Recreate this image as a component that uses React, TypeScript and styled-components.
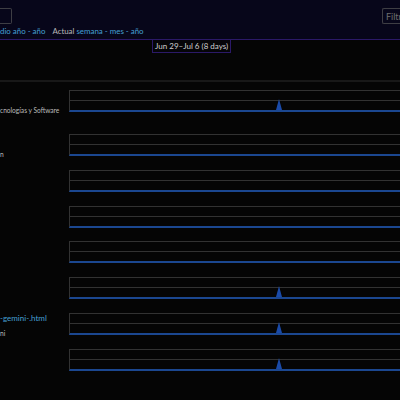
import styled, { createGlobalStyle } from "styled-components";

const GlobalStyle = createGlobalStyle`
  html, body {
    margin: 0;
    padding: 0;
    background: #050505;
    overflow: hidden;
  }
  body {
    font-family: Lato, "Noto Sans", sans-serif;
    color: #c8c8c8;
  }
`;

const Page = styled.div`
  width: 400px;
  height: 400px;
  overflow: hidden;
  background: #050505;
`;

const Header = styled.header`
  height: 40px;
  box-sizing: border-box;
  padding-top: 8px;
  background: #07061a;
  border-bottom: 1px solid #2b1968;
`;

const InputRow = styled.div`
  display: flex;
  justify-content: space-between;
  height: 16px;
`;

const CutInput = styled.input<{ $side: "left" | "right" }>`
  box-sizing: border-box;
  height: 16px;
  width: ${(p) => (p.$side === "left" ? "12px" : "18px")};
  padding: 0 0 0 3px;
  background: transparent;
  border: 1px solid #3e3e44;
  ${(p) =>
    p.$side === "left"
      ? "border-left: none; border-radius: 0 2px 2px 0;"
      : "border-right: none; border-radius: 2px 0 0 2px;"}
  font-family: Lato, sans-serif;
  font-size: 9px;
  color: #777;
  outline: none;
  &::placeholder {
    color: #6e6e6e;
  }
`;

const PeriodLine = styled.div`
  display: flex;
  gap: 7px;
  margin-top: 1px;
  font-size: 7.9px;
  line-height: 12px;
  white-space: nowrap;
`;

const LinkText = styled.span`
  color: #45a0d4;
`;

const PlainText = styled.span`
  color: #b8b8b8;
`;

const ChipRow = styled.div`
  display: flex;
  padding-left: 152px;
  margin-top: -1px;
  height: 41px;
  border-bottom: 2px solid #181818;
`;

const DateChip = styled.div`
  height: 14px;
  box-sizing: border-box;
  padding: 0 2px;
  border: 1px solid #2b1968;
  background: #050508;
  font-size: 8px;
  line-height: 12px;
  color: #cfcfcf;
  white-space: nowrap;
`;

const Rows = styled.div`
  padding-top: 8px;
`;

const Row = styled.div<{ $height: number }>`
  display: grid;
  grid-template-columns: 69px 1fr;
  height: ${(p) => p.$height}px;
`;

const Label = styled.div`
  display: flex;
  flex-direction: column;
  line-height: 10px;
  white-space: nowrap;
  overflow: hidden;
`;

const LabelLink = styled.div`
  height: 10px;
  margin-bottom: 5px;
  font-size: 8px;
  color: #45a0d4;
`;

const LabelDesc = styled.div`
  font-size: 6.6px;
  color: #bdbdbd;
`;

const Chart = styled.div`
  position: relative;
  height: 22px;
  box-sizing: border-box;
  border-top: 1px solid #323232;
  border-left: 1px solid #323232;
  border-bottom: 2px solid #1b4790;
`;

const MidLine = styled.div`
  margin-top: 9px;
  height: 1px;
  background: #323232;
`;

const Spike = styled.svg`
  position: absolute;
  left: 206px;
  bottom: 0;
`;

type RowData = { link?: string; desc?: string; spike: boolean; height: number };

const rows: RowData[] = [
  { desc: "cnologías y Software", spike: true, height: 44 },
  { desc: "n", spike: false, height: 35.8 },
  { spike: false, height: 35.8 },
  { spike: false, height: 35.8 },
  { spike: false, height: 35.8 },
  { spike: true, height: 35.8 },
  { link: "-gemini-.html", desc: "ni", spike: true, height: 35.8 },
  { spike: true, height: 35.8 },
];

const App = () => {
  return (
    <Page>
      <GlobalStyle />
      <Header>
        <InputRow>
          <CutInput $side="left" />
          <CutInput $side="right" placeholder="Filtrar..." />
        </InputRow>
        <PeriodLine>
          <LinkText>dio año - año</LinkText>
          <span>
            <PlainText>Actual </PlainText>
            <LinkText>semana - mes - año</LinkText>
          </span>
        </PeriodLine>
      </Header>
      <ChipRow>
        <DateChip>Jun 29–Jul 6 (8 days)</DateChip>
      </ChipRow>
      <Rows>
        {rows.map((r, i) => (
          <Row key={i} $height={r.height}>
            <Label>
              <LabelLink>{r.link ?? ""}</LabelLink>
              <LabelDesc>{r.desc ?? ""}</LabelDesc>
            </Label>
            <Chart>
              <MidLine />
              {r.spike && (
                <Spike width="6" height="11" viewBox="0 0 6 11">
                  <polygon points="0,11 3,0 6,11" fill="#1a4aa8" />
                </Spike>
              )}
            </Chart>
          </Row>
        ))}
      </Rows>
    </Page>
  );
};

export default App;
